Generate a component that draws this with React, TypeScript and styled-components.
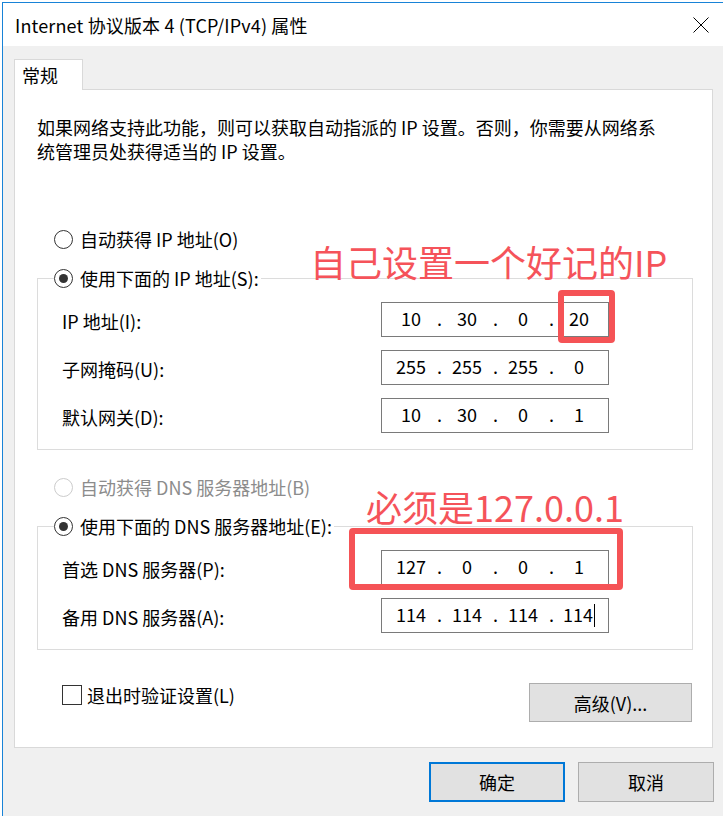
import styled, { createGlobalStyle } from 'styled-components';

const GlobalStyle = createGlobalStyle`
  html, body {
    margin: 0;
    padding: 0;
    background: #fff;
    overflow: hidden;
  }
  body {
    font-family: "Noto Sans CJK SC", "Noto Sans", sans-serif;
    font-size: 18px;
    color: #000;
  }
`;

const Window = styled.div`
  margin: 2px 0 0 2px;
  width: 721px;
  height: 813px;
  border-top: 1px solid #1883d7;
  border-left: 1px solid #1883d7;
  background: #f0f0f0;
  display: flex;
  flex-direction: column;
`;

const TitleBar = styled.div`
  height: 43px;
  background: #fff;
  display: flex;
  align-items: center;
  padding-left: 12px;
`;

const Title = styled.div`
  flex: 1;
  line-height: 24px;
  white-space: nowrap;
  letter-spacing: 0.15px;
`;

const Close = styled.div`
  width: 46px;
  height: 43px;
  display: flex;
  align-items: center;
  justify-content: center;
`;

const Body = styled.div`
  padding: 13px 10px 0 11px;
`;

const Tabs = styled.div`
  display: flex;
`;

const Tab = styled.div`
  position: relative;
  z-index: 1;
  box-sizing: border-box;
  width: 69px;
  height: 31px;
  margin-bottom: -1px;
  padding-left: 7px;
  line-height: 30px;
  background: #fff;
  border: 1px solid #d9d9d9;
  border-bottom: none;
`;

const Panel = styled.div`
  position: relative;
  box-sizing: border-box;
  width: 699px;
  padding: 25px 19px 25px 22px;
  background: #fff;
  border: 1px solid #d9d9d9;
`;

const Intro = styled.p`
  margin: 0 0 64px;
  line-height: 24px;
  white-space: nowrap;
`;

const RadioRow = styled.label<{ $disabled?: boolean }>`
  display: flex;
  align-items: center;
  gap: 7px;
  height: 24px;
  color: ${(p) => (p.$disabled ? '#8c8c8c' : '#000')};
`;

const LooseRadio = styled(RadioRow)`
  margin-left: 17px;
  margin-bottom: 15px;
`;

const Radio = styled.span<{ $checked?: boolean; $disabled?: boolean }>`
  box-sizing: border-box;
  width: 19px;
  height: 19px;
  border-radius: 50%;
  border: 1px solid ${(p) => (p.$disabled ? '#cccccc' : '#333')};
  display: flex;
  align-items: center;
  justify-content: center;

  &::after {
    content: '';
    display: ${(p) => (p.$checked ? 'block' : 'none')};
    width: 9px;
    height: 9px;
    border-radius: 50%;
    background: #333;
  }
`;

const Group = styled.fieldset<{ $gapAfter?: number }>`
  margin: 0 0 ${(p) => p.$gapAfter ?? 0}px;
  min-width: 0;
  padding: 12px 0 16px 24px;
  border: 1px solid #dcdcdc;
`;

/* legend sits inside the fieldset's padding, so pull it back towards the border */
const Legend = styled.legend`
  margin-left: -8px;
  padding: 0 2px 0 0;
`;

const FieldGrid = styled.div`
  display: grid;
  grid-template-columns: 319px 228px;
  row-gap: 13px;
  align-items: center;
`;

const FieldLabel = styled.span`
  line-height: 24px;
  padding-top: 3px;
`;

const IpBox = styled.div`
  box-sizing: border-box;
  width: 228px;
  height: 35px;
  padding-left: 7px;
  display: flex;
  align-items: center;
  background: #fff;
  border: 1px solid #7a7a7a;
`;

const Octet = styled.span`
  width: 44px;
  text-align: center;
  line-height: 24px;
  padding-bottom: 3px;
`;

const Dot = styled.span`
  box-sizing: border-box;
  width: 12px;
  padding: 0 0 3px 4px;
  line-height: 24px;
`;

const Caret = styled.span`
  display: inline-block;
  width: 1px;
  height: 23px;
  margin-left: 1px;
  vertical-align: -5px;
  background: #000;
`;

const BottomRow = styled.div`
  display: flex;
  justify-content: space-between;
  align-items: flex-start;
  margin-top: 33px;
  padding: 0 1px 0 25px;
`;

const CheckRow = styled.label`
  display: flex;
  align-items: center;
  gap: 5px;
  height: 24px;
`;

const CheckBox = styled.span`
  box-sizing: border-box;
  width: 20px;
  height: 20px;
  border: 1px solid #333;
  background: #fff;
`;

const Button = styled.button<{ $primary?: boolean; $w: number; $h: number }>`
  box-sizing: border-box;
  width: ${(p) => p.$w}px;
  height: ${(p) => p.$h}px;
  padding: 0;
  font: inherit;
  font-size: 18px;
  color: #000;
  background: #e1e1e1;
  border: ${(p) => (p.$primary ? '2px solid #0078d7' : '1px solid #adadad')};
`;

const Actions = styled.div`
  display: flex;
  justify-content: flex-end;
  gap: 13px;
  margin-top: 14px;
`;

const NoteText = styled.div<{ $left: number; $top: number }>`
  position: absolute;
  left: ${(p) => p.$left}px;
  top: ${(p) => p.$top}px;
  font-size: 36px;
  line-height: 36px;
  color: #f5535a;
  white-space: nowrap;
`;

const NoteBox = styled.div<{ $left: number; $top: number; $w: number; $h: number }>`
  position: absolute;
  box-sizing: border-box;
  left: ${(p) => p.$left}px;
  top: ${(p) => p.$top}px;
  width: ${(p) => p.$w}px;
  height: ${(p) => p.$h}px;
  border: 6px solid #f55356;
  border-radius: 4px;
`;

const IpField = ({ parts, caret }: { parts: string[]; caret?: boolean }) => (
  <IpBox>
    {parts.flatMap((p, i) => [
      i > 0 ? <Dot key={`d${i}`}>.</Dot> : null,
      <Octet key={`o${i}`}>
        {p}
        {caret && i === parts.length - 1 && <Caret />}
      </Octet>,
    ])}
  </IpBox>
);

export default function App() {
  return (
    <>
      <GlobalStyle />
      <Window>
        <TitleBar>
          <Title>Internet 协议版本 4 (TCP/IPv4) 属性</Title>
          <Close>
            <svg width="16" height="16" viewBox="0 0 16 16">
              <path d="M0.5 0.5 L15.5 15.5 M15.5 0.5 L0.5 15.5" stroke="#000" strokeWidth="1" fill="none" />
            </svg>
          </Close>
        </TitleBar>
        <Body>
          <Tabs>
            <Tab>常规</Tab>
          </Tabs>
          <Panel>
            <Intro>
              如果网络支持此功能，则可以获取自动指派的 IP 设置。否则，你需要从网络系
              <br />
              统管理员处获得适当的 IP 设置。
            </Intro>

            <LooseRadio>
              <Radio />
              自动获得 IP 地址(O)
            </LooseRadio>
            <Group $gapAfter={25}>
              <Legend>
                <RadioRow>
                  <Radio $checked />
                  使用下面的 IP 地址(S):
                </RadioRow>
              </Legend>
              <FieldGrid>
                <FieldLabel>IP 地址(I):</FieldLabel>
                <IpField parts={['10', '30', '0', '20']} />
                <FieldLabel>子网掩码(U):</FieldLabel>
                <IpField parts={['255', '255', '255', '0']} />
                <FieldLabel>默认网关(D):</FieldLabel>
                <IpField parts={['10', '30', '0', '1']} />
              </FieldGrid>
            </Group>

            <LooseRadio $disabled>
              <Radio $disabled />
              自动获得 DNS 服务器地址(B)
            </LooseRadio>
            <Group>
              <Legend>
                <RadioRow>
                  <Radio $checked />
                  使用下面的 DNS 服务器地址(E):
                </RadioRow>
              </Legend>
              <FieldGrid>
                <FieldLabel>首选 DNS 服务器(P):</FieldLabel>
                <IpField parts={['127', '0', '0', '1']} />
                <FieldLabel>备用 DNS 服务器(A):</FieldLabel>
                <IpField parts={['114', '114', '114', '114']} caret />
              </FieldGrid>
            </Group>

            <BottomRow>
              <CheckRow>
                <CheckBox />
                退出时验证设置(L)
              </CheckRow>
              <Button $w={163} $h={39}>高级(V)...</Button>
            </BottomRow>

            <NoteText $left={295} $top={153}>自己设置一个好记的IP</NoteText>
            <NoteBox $left={543} $top={200} $w={57} $h={53} />
            <NoteText $left={351} $top={398}>必须是127.0.0.1</NoteText>
            <NoteBox $left={334} $top={438} $w={274} $h={62} />
          </Panel>
          <Actions>
            <Button $primary $w={136} $h={40}>确定</Button>
            <Button $w={136} $h={40}>取消</Button>
          </Actions>
        </Body>
      </Window>
    </>
  );
}
